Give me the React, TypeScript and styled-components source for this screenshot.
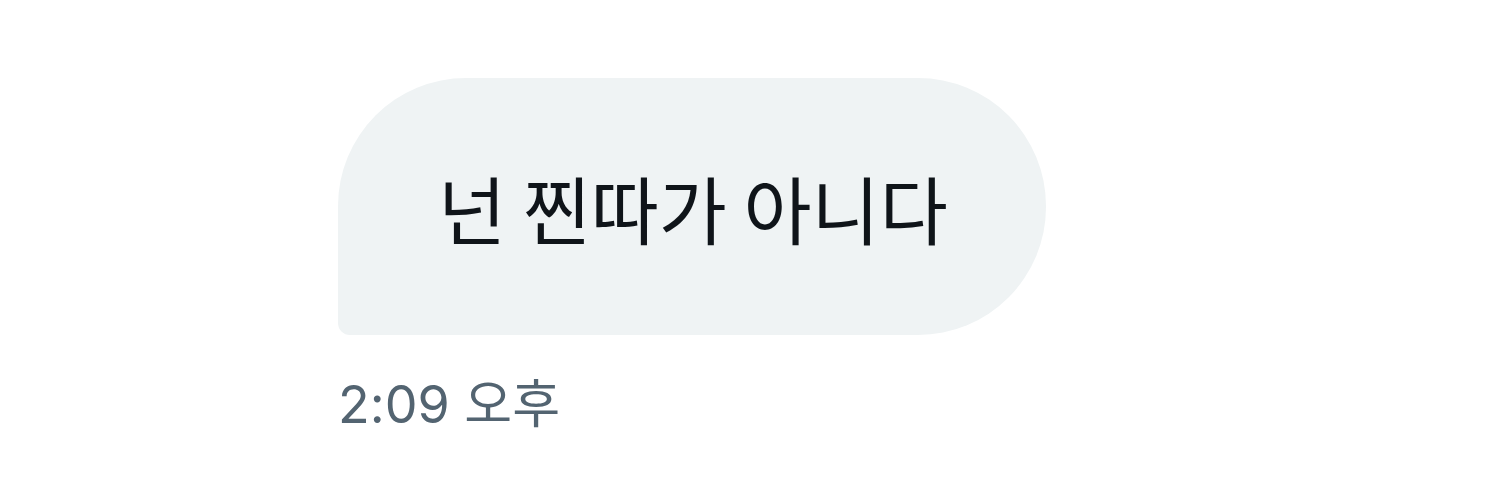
import React from "react";
import styled, { createGlobalStyle } from "styled-components";

const Global = createGlobalStyle`
  html, body { margin: 0; padding: 0; background: #ffffff; }
  body { font-family: Inter, "Noto Sans CJK KR", sans-serif; }
`;

const Page = styled.div`
  width: 1500px;
  height: 500px;
  box-sizing: border-box;
  padding: 78px 0 0 338px;
  display: flex;
  flex-direction: column;
  align-items: flex-start;
`;

const Bubble = styled.div`
  background: #eff3f4;
  color: #0f1419;
  border-radius: 128px 128px 128px 12px;
  padding: 0 98px 0 100px;
  height: 257px;
  box-sizing: border-box;
  display: flex;
  align-items: center;
  font-family: "Noto Sans CJK KR", sans-serif;
  font-size: 74px;
  line-height: 1;
  white-space: nowrap;
`;

const Time = styled.div`
  margin-top: 40px;
  color: #536471;
  font-family: Inter, "Noto Sans CJK KR", sans-serif;
  font-size: 52px;
  line-height: 60px;
`;

export default function App() {
  return (
    <>
      <Global />
      <Page>
        <Bubble>넌 찐따가 아니다</Bubble>
        <Time>2:09 오후</Time>
      </Page>
    </>
  );
}
